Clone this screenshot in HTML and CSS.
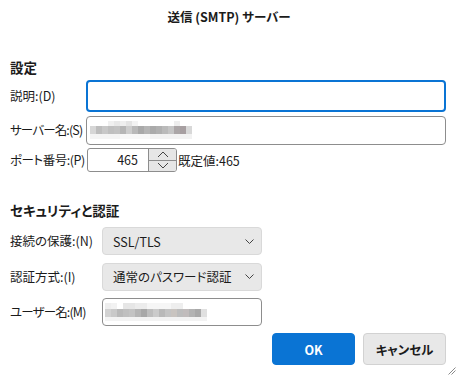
FILE: index.html
```html
<!DOCTYPE html>
<html lang="ja">
<head>
<meta charset="utf-8">
<link rel="stylesheet" href="styles.css">
</head>
<body>
<div class="dialog">
  <h1 class="title">送信 (SMTP) サーバー</h1>

  <section class="group group-settings">
    <h2 class="group-title">設定</h2>
    <div class="form form-settings">
      <label class="label">説明:(D)</label>
      <div class="field field-focus"></div>

      <label class="label label-narrow">サーバー名:(S)</label>
      <div class="field field-server"><div class="mosaic mosaic-server"></div></div>

      <label class="label label-semi">ポート番号:(P)</label>
      <div class="port-row">
        <div class="number">
          <span class="number-value">465</span>
          <div class="spinner">
            <span class="spin spin-up"><svg width="12" height="7" viewBox="0 0 12 7"><polyline points="1,6 6,1 11,6" fill="none" stroke="#444" stroke-width="1"/></svg></span>
            <span class="spin spin-down"><svg width="12" height="7" viewBox="0 0 12 7"><polyline points="1,1 6,6 11,1" fill="none" stroke="#444" stroke-width="1"/></svg></span>
          </div>
        </div>
        <span class="default">既定値:465</span>
      </div>
    </div>
  </section>

  <section class="group group-security">
    <h2 class="group-title">セキュリティと認証</h2>
    <div class="form form-security">
      <label class="label">接続の保護:(N)</label>
      <div class="select select-conn"><span>SSL/TLS</span><svg class="chev" width="9" height="5" viewBox="0 0 9 5"><polyline points="0.5,0.5 4.5,4.5 8.5,0.5" fill="none" stroke="#444" stroke-width="1"/></svg></div>

      <label class="label">認証方式:(I)</label>
      <div class="select select-auth"><span>通常のパスワード認証</span><svg class="chev" width="9" height="5" viewBox="0 0 9 5"><polyline points="0.5,0.5 4.5,4.5 8.5,0.5" fill="none" stroke="#444" stroke-width="1"/></svg></div>

      <label class="label label-narrow">ユーザー名:(M)</label>
      <div class="field field-user"><div class="mosaic mosaic-user"></div></div>
    </div>
  </section>

  <div class="buttons">
    <button class="btn btn-ok">OK</button>
    <button class="btn btn-cancel">キャンセル</button>
  </div>

  <svg class="grip" width="8" height="8" viewBox="0 0 8 8"><line x1="7.5" y1="0.5" x2="0.5" y2="7.5" stroke="#8a8a8a" stroke-width="1"/><line x1="7.5" y1="3.5" x2="3.5" y2="7.5" stroke="#8a8a8a" stroke-width="1"/></svg>
</div>
</body>
</html>
```

FILE: styles.css
```css
* { box-sizing: border-box; }
html, body { margin: 0; padding: 0; background: #ffffff; }
body {
  font-family: "Noto Sans CJK JP", "Noto Sans", sans-serif;
  font-size: 12px;
  font-feature-settings: "palt";
  color: #1b1b1b;
  width: 458px;
  height: 377px;
  overflow: hidden;
}
.dialog {
  position: relative;
  width: 458px;
  height: 377px;
  padding: 7px 12px 0 10px;
  display: flex;
  flex-direction: column;
}
.title {
  margin: 0;
  font-size: 12.5px;
  font-weight: 700;
  line-height: 20px;
  text-align: center;
  padding-left: 2px;
}
.group { display: flex; flex-direction: column; }
.group-settings { margin-top: 31px; }
.group-security { margin-top: 29px; }
.group-title {
  margin: 0;
  font-size: 13.5px;
  font-weight: 700;
  line-height: 18px;
}
.form {
  display: grid;
  align-items: center;
}
.form-settings {
  grid-template-columns: 76px 360px;
  grid-template-rows: 32px 29px 24px;
  row-gap: 3.5px;
  margin-top: 4px;
}
.form-security {
  grid-template-columns: 92px 160px;
  grid-template-rows: 28px 28px 28px;
  row-gap: 7.5px;
  margin-top: 8px;
}
.label { white-space: nowrap; line-height: 16px; font-size: 12.5px; }
.label-narrow { letter-spacing: -0.85px; }
.label-semi { letter-spacing: -0.45px; }
.field {
  height: 100%;
  border: 1px solid #8d8d8d;
  border-radius: 4px;
  background: #fff;
  display: flex;
  align-items: center;
}
.field-focus { border: 2px solid #0a74d4; }
.field-server { padding-left: 3px; }
.field-user { padding-left: 2px; }
.mosaic {
  width: 102px;
  height: 18px;
  background:
    linear-gradient(90deg, #fff 0 18px, #f0f0f0 18px 24px, #e8e8e8 24px 30px, #efefef 30px 36px, #e4e4e4 36px 42px, #f3f3f3 42px 48px, #fff 48px 84px, #eeeeee 84px 90px, #fff 90px) 0 0 / 100% 5px no-repeat,
    linear-gradient(90deg, #d6d6d6 0 6px, #bdbdbd 6px 12px, #c8c8c8 12px 18px, #bfbfbf 18px 24px, #c2c2c2 24px 30px, #b6b6b6 30px 36px, #cdcdcd 36px 42px, #b9b9b9 42px 48px, #a9a9a9 48px 54px, #b5b5b5 54px 60px, #aaaaaa 60px 66px, #b0b0b0 66px 72px, #bababa 72px 78px, #c5c5c5 78px 84px, #aba6a7 84px 90px, #a79fa1 90px 96px, #d8d8d8 96px 102px) 0 5px / 100% 8px no-repeat,
    linear-gradient(90deg, #f4f4f4 0 30px, #f8f8f8 30px 60px, #f2f2f2 60px 102px) 0 13px / 100% 5px no-repeat;
}
.mosaic-user {
  background:
    linear-gradient(90deg, #eeeeee 0 6px, #f2f2f2 6px 12px, #fff 12px 18px, #e6e6e6 18px 30px, #ececec 30px 42px, #f6f6f6 42px 66px, #eeeeee 66px 78px, #fff 78px) 0 0 / 100% 6px no-repeat,
    linear-gradient(90deg, #d2d2d2 0 6px, #c9c9c9 6px 12px, #b9b9b9 12px 18px, #bfbfbf 18px 24px, #c3c3c3 24px 30px, #b5b5b5 30px 36px, #a8a8a8 36px 42px, #bebebe 42px 48px, #cbcbcb 48px 54px, #b9b9b9 54px 60px, #c4c4c4 60px 66px, #c9c4c0 66px 72px, #bdbdbd 72px 78px, #c1bcbc 78px 84px, #b3b3b3 84px 90px, #a9a9a9 90px 96px, #e0e0e0 96px 102px) 0 6px / 100% 8px no-repeat,
    linear-gradient(90deg, #f3f3f3 0 102px) 0 14px / 100% 4px no-repeat;
}
.port-row {
  display: flex;
  align-items: center;
  height: 100%;
  padding-left: 1px;
}
.number {
  display: flex;
  width: 90px;
  height: 100%;
  border: 1px solid #8d8d8d;
  border-radius: 3px;
  overflow: hidden;
}
.number-value {
  flex: 1;
  text-align: right;
  padding-right: 10px;
  line-height: 22px;
  font-size: 12.5px;
}
.spinner {
  width: 28px;
  display: flex;
  flex-direction: column;
  border-left: 1px solid #8d8d8d;
  background: #e6e6e6;
}
.spin {
  flex: 1;
  display: flex;
  align-items: center;
  justify-content: center;
}
.spin-up { border-bottom: 1px solid #8d8d8d; }
.default { margin-left: 1px; font-size: 12.5px; }
.select {
  height: 100%;
  background: #e8e8e8;
  border: 1px solid #d9d9d9;
  border-radius: 4px;
  display: flex;
  align-items: center;
  justify-content: space-between;
  padding: 0 7px 0 10px;
  font-size: 12.5px;
}
.field-user { height: 100%; }
.buttons {
  display: flex;
  justify-content: flex-end;
  gap: 8px;
  margin-top: 7px;
}
.btn {
  font-family: "Noto Sans CJK JP", "Noto Sans", sans-serif;
  font-feature-settings: "palt";
  font-size: 12.5px;
  font-weight: 700;
  height: 32px;
  border-radius: 4px;
  padding: 0;
}
.btn-ok {
  width: 83px;
  background: #0a74d4;
  border: 1px solid #0a74d4;
  color: #ffffff;
}
.btn-cancel {
  width: 83px;
  background: #e8e8e8;
  border: 1px solid #d2d2d2;
  color: #1b1b1b;
}
.grip {
  position: absolute;
  right: 2px;
  bottom: 2px;
}
```
